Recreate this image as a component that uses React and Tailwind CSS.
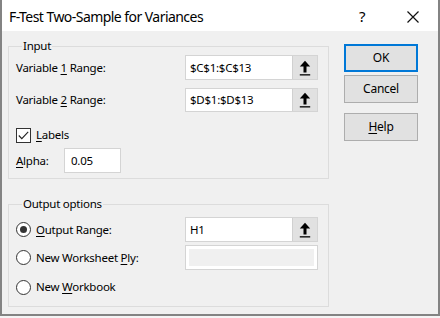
import React from 'react';

const FONT = { fontFamily: '"Noto Sans", "Open Sans", Arial, sans-serif' };

function Ul({ children }) {
  return <span className="underline underline-offset-2">{children}</span>;
}

function PickArrow() {
  return (
    <svg width="12" height="16" viewBox="0 0 12 16">
      <path d="M6 0.8 L11.2 6.6 H7.5 V12.6 H4.5 V6.6 H0.8 Z" fill="#000" />
      <rect x="0.8" y="14.2" width="10.4" height="1.3" fill="#000" />
    </svg>
  );
}

function RefEdit({ value, h = 'h-[25px]' }) {
  return (
    <div className={`flex w-[133px] ${h} border border-[#d4d4d4] bg-white`}>
      <div className="flex-1 flex items-center pl-[4px]">{value}</div>
      <div className="w-[25px] flex items-center justify-center bg-[#e1e1e1] border-l border-[#d0d0d0]">
        <PickArrow />
      </div>
    </div>
  );
}

function Radio({ checked }) {
  return (
    <div className="w-[15px] h-[15px] rounded-full border border-[#333] bg-white flex items-center justify-center">
      {checked && <div className="w-[7px] h-[7px] rounded-full bg-[#333]" />}
    </div>
  );
}

function Button({ children, primary }) {
  return (
    <div
      className={`h-[28px] flex items-center justify-center bg-[#e1e1e1] border ${
        primary ? 'border-[#0078d7] border-2' : 'border-[#adadad]'
      }`}
    >
      {children}
    </div>
  );
}

export default function App() {
  return (
    <div className="w-[440px] h-[318px] bg-[#f4f4f4] text-black" style={FONT}>
      <div className="w-[440px] h-[316px] flex flex-col border-l-2 border-r-2 border-b-2 border-[#838383]">
        {/* title bar */}
        <div className="h-[31px] bg-white flex items-center pl-[7px] pt-[2px]">
          <div className="text-[14px] flex-1 tracking-[-0.55px]">F-Test Two-Sample for Variances</div>
          <div className="text-[15px] w-[14px] mr-[34px]">?</div>
          <div className="mr-[19px]">
            <svg width="12" height="12" viewBox="0 0 12 12">
              <path d="M0.5 0.5 L11.5 11.5 M11.5 0.5 L0.5 11.5" stroke="#111" strokeWidth="1.2" />
            </svg>
          </div>
        </div>

        {/* body */}
        <div className="flex-1 bg-[#f0f0f0] flex pl-[6px] text-[11.5px] tracking-[-0.25px]">
          <div className="w-[321px] pt-[7px]">
            <fieldset className="border border-[#dcdcdc] pl-[7px] pr-[10px] pb-[5px]">
              <legend className="px-[1px] ml-[6px] leading-[16px]">Input</legend>
              <div className="flex items-center justify-between h-[25px] mt-[1px]">
                <span>Variable <Ul>1</Ul> Range:</span>
                <RefEdit value="$C$1:$C$13" />
              </div>
              <div className="flex items-center justify-between h-[25px] mt-[7px]">
                <span>Variable <Ul>2</Ul> Range:</span>
                <RefEdit value="$D$1:$D$13" h="h-[24px]" />
              </div>
              <div className="flex items-center gap-[5px] mt-[15px] h-[16px]">
                <div className="w-[15px] h-[15px] border border-[#333] bg-white flex items-center justify-center">
                  <svg width="11" height="9" viewBox="0 0 11 9">
                    <path d="M0.8 4.5 L3.8 7.6 L10.2 0.8" stroke="#222" strokeWidth="1.1" fill="none" />
                  </svg>
                </div>
                <span><Ul>L</Ul>abels</span>
              </div>
              <div className="flex items-center mt-[5px] h-[25px]">
                <span className="w-[48px]"><Ul>A</Ul>lpha:</span>
                <div className="w-[57px] h-[25px] border border-[#d4d4d4] bg-white flex items-center pl-[6px]">0.05</div>
              </div>
            </fieldset>

            <fieldset className="border border-[#dcdcdc] pl-[7px] pr-[10px] pb-[11px] mt-[17px]">
              <legend className="px-[1px] ml-[6px] leading-[16px]">Output options</legend>
              <div className="flex items-center justify-between h-[25px] mt-[5px]">
                <div className="flex items-center gap-[5px]">
                  <Radio checked />
                  <span><Ul>O</Ul>utput Range:</span>
                </div>
                <RefEdit value="H1" h="h-[25px]" />
              </div>
              <div className="flex items-center justify-between h-[25px] mt-[3px]">
                <div className="flex items-center gap-[5px]">
                  <Radio />
                  <span>New Worksheet <Ul>P</Ul>ly:</span>
                </div>
                <div className="w-[133px] h-[25px] border border-[#d4d4d4] bg-white p-[3px]">
                  <div className="w-full h-full bg-[#f0f0f0]" />
                </div>
              </div>
              <div className="flex items-center gap-[5px] mt-[9px] h-[16px]">
                <Radio />
                <span>New <Ul>W</Ul>orkbook</span>
              </div>
            </fieldset>
          </div>

          <div className="w-[74px] ml-[15px] pt-[13px] flex flex-col text-[12px]">
            <Button primary>OK</Button>
            <div className="mt-[3px]"><Button>Cancel</Button></div>
            <div className="mt-[10px]"><Button><span><Ul>H</Ul>elp</span></Button></div>
          </div>
        </div>
      </div>
    </div>
  );
}
